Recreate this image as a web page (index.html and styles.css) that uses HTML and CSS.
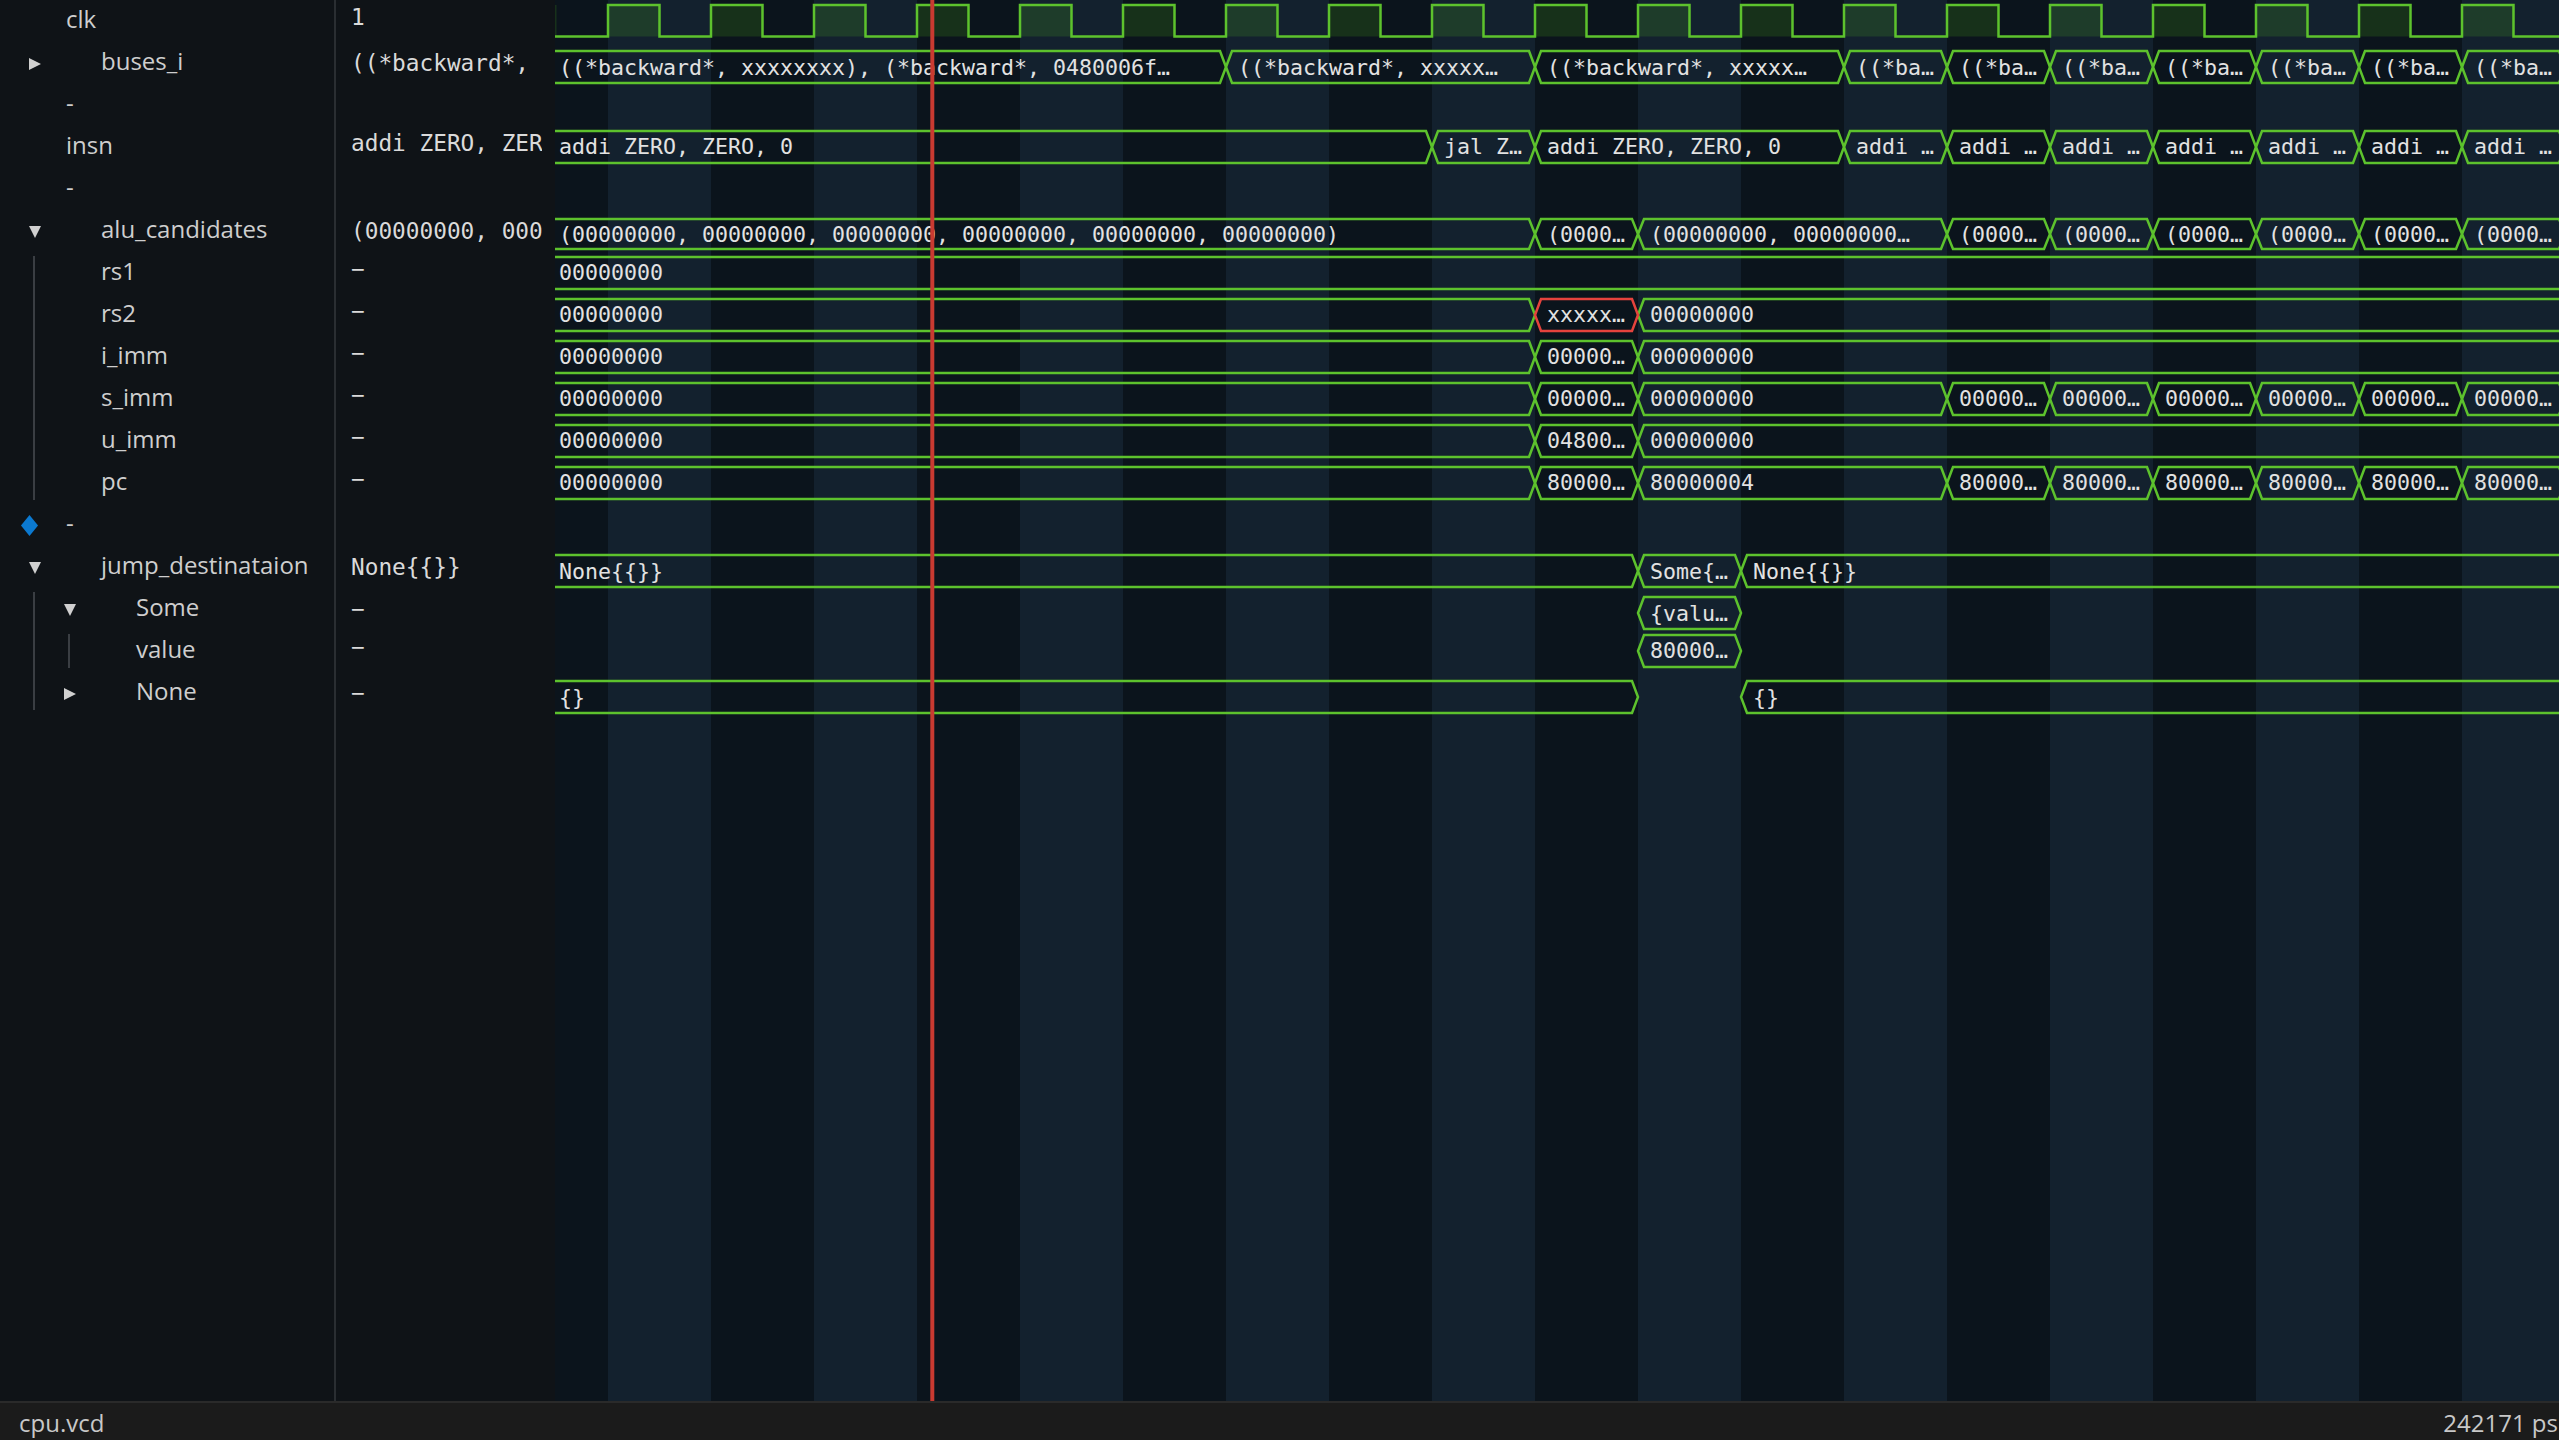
FILE: index.html
```html
<!DOCTYPE html>
<html>
<head>
<meta charset="utf-8">
<title>Surfer - cpu.vcd</title>
<link rel="stylesheet" href="styles.css">
</head>
<body>
<div class="app">
  <div class="main">
    <div class="names">
      <div class="row leaf"><span class="lbl">clk</span></div>
      <div class="row"><svg class="arrow" viewBox="0 0 12 12"><path d="M0,0 L12,6 L0,12 Z"/></svg><span class="lbl">buses_i</span></div>
      <div class="row leaf"><span class="lbl">-</span></div>
      <div class="row leaf"><span class="lbl">insn</span></div>
      <div class="row leaf"><span class="lbl">-</span></div>
      <div class="row"><svg class="arrow" viewBox="0 0 12 12"><path d="M0,0 L12,0 L6,12 Z"/></svg><span class="lbl">alu_candidates</span></div>
      <div class="kids">
        <div class="guide"></div>
        <div class="kids-list">
          <div class="row leaf"><span class="lbl">rs1</span></div>
          <div class="row leaf"><span class="lbl">rs2</span></div>
          <div class="row leaf"><span class="lbl">i_imm</span></div>
          <div class="row leaf"><span class="lbl">s_imm</span></div>
          <div class="row leaf"><span class="lbl">u_imm</span></div>
          <div class="row leaf"><span class="lbl">pc</span></div>
        </div>
      </div>
      <div class="row"><svg class="diamond" viewBox="0 0 17 21"><path d="M8.5,0 L17,10.5 L8.5,21 L0,10.5 Z"/></svg><span class="lbl">-</span></div>
      <div class="row"><svg class="arrow" viewBox="0 0 12 12"><path d="M0,0 L12,0 L6,12 Z"/></svg><span class="lbl">jump_destinataion</span></div>
      <div class="kids">
        <div class="guide"></div>
        <div class="kids-list">
          <div class="row"><svg class="arrow" viewBox="0 0 12 12"><path d="M0,0 L12,0 L6,12 Z"/></svg><span class="lbl">Some</span></div>
          <div class="kids">
            <div class="guide"></div>
            <div class="kids-list">
              <div class="row leaf"><span class="lbl">value</span></div>
            </div>
          </div>
          <div class="row"><svg class="arrow" viewBox="0 0 12 12"><path d="M0,0 L12,6 L0,12 Z"/></svg><span class="lbl">None</span></div>
        </div>
      </div>
    </div>
    <div class="sep"></div>
    <div class="values">
      <div class="vrow">1</div>
      <div class="vrow grp">((*backward*,</div>
      <div class="vrow"></div>
      <div class="vrow">addi ZERO, ZER</div>
      <div class="vrow"></div>
      <div class="vrow grp">(00000000, 000</div>
      <div class="vrow">−</div>
      <div class="vrow">−</div>
      <div class="vrow">−</div>
      <div class="vrow">−</div>
      <div class="vrow">−</div>
      <div class="vrow">−</div>
      <div class="vrow"></div>
      <div class="vrow grp">None{{}}</div>
      <div class="vrow grp">−</div>
      <div class="vrow">−</div>
      <div class="vrow grp">−</div>
    </div>
    <div class="wave">
      <svg class="wave-svg" width="2004" height="1401" viewBox="0 0 2004 1401">
        <defs>
          <pattern id="stripes" x="53" y="0" width="206" height="1401" patternUnits="userSpaceOnUse">
            <rect class="st-dark" width="206" height="1401"/>
            <rect class="st-light" width="103" height="1401"/>
          </pattern>
          <pattern id="clkfill" x="53" y="0" width="103" height="1401" patternUnits="userSpaceOnUse">
            <rect class="clk-hi" width="51.5" height="1401"/>
          </pattern>
          <polygon id="u" points="0,0 6,-16 97,-16 103,0 97,16 6,16"/>
          <polygon id="ua" points="0,0 6,-15 97,-15 103,0 97,15 6,15"/>
        </defs>
        <rect width="2004" height="1401" fill="url(#stripes)"/>
        <rect x="0" y="5" width="2004" height="31.5" fill="url(#clkfill)"/>

        <!-- clk -->
        <path class="sig" d="M0,36.5 H53 V5 H104.5 V36.5 H156 V5 H207.5 V36.5 H259 V5 H310.5 V36.5 H362 V5 H413.5 V36.5 H465 V5 H516.5 V36.5 H568 V5 H619.5 V36.5 H671 V5 H722.5 V36.5 H774 V5 H825.5 V36.5 H877 V5 H928.5 V36.5 H980 V5 H1031.5 V36.5 H1083 V5 H1134.5 V36.5 H1186 V5 H1237.5 V36.5 H1289 V5 H1340.5 V36.5 H1392 V5 H1443.5 V36.5 H1495 V5 H1546.5 V36.5 H1598 V5 H1649.5 V36.5 H1701 V5 H1752.5 V36.5 H1804 V5 H1855.5 V36.5 H1907 V5 H1958.5 V36.5 H2010"/>

        <!-- buses_i -->
        <polygon class="sig" points="-10,67 -4,51 665,51 671,67 665,83 -4,83"/>
        <polygon class="sig" points="671,67 677,51 974,51 980,67 974,83 677,83"/>
        <polygon class="sig" points="980,67 986,51 1283,51 1289,67 1283,83 986,83"/>
        <use href="#u" class="sig" x="1289" y="67"/>
        <use href="#u" class="sig" x="1392" y="67"/>
        <use href="#u" class="sig" x="1495" y="67"/>
        <use href="#u" class="sig" x="1598" y="67"/>
        <use href="#u" class="sig" x="1701" y="67"/>
        <use href="#u" class="sig" x="1804" y="67"/>
        <use href="#u" class="sig" x="1907" y="67"/>
        <text class="wt" x="4" y="74.5">((*backward*, xxxxxxxx), (*backward*, 0480006f…</text>
        <text class="wt" x="683" y="74.5">((*backward*, xxxxx…</text>
        <text class="wt" x="992" y="74.5">((*backward*, xxxxx…</text>
        <text class="wt" x="1301" y="74.5">((*ba…</text>
        <text class="wt" x="1404" y="74.5">((*ba…</text>
        <text class="wt" x="1507" y="74.5">((*ba…</text>
        <text class="wt" x="1610" y="74.5">((*ba…</text>
        <text class="wt" x="1713" y="74.5">((*ba…</text>
        <text class="wt" x="1816" y="74.5">((*ba…</text>
        <text class="wt" x="1919" y="74.5">((*ba…</text>

        <!-- insn -->
        <polygon class="sig" points="-10,147 -4,131 871,131 877,147 871,163 -4,163"/>
        <use href="#u" class="sig" x="877" y="147"/>
        <polygon class="sig" points="980,147 986,131 1283,131 1289,147 1283,163 986,163"/>
        <use href="#u" class="sig" x="1289" y="147"/>
        <use href="#u" class="sig" x="1392" y="147"/>
        <use href="#u" class="sig" x="1495" y="147"/>
        <use href="#u" class="sig" x="1598" y="147"/>
        <use href="#u" class="sig" x="1701" y="147"/>
        <use href="#u" class="sig" x="1804" y="147"/>
        <use href="#u" class="sig" x="1907" y="147"/>
        <text class="wt" x="4" y="154">addi ZERO, ZERO, 0</text>
        <text class="wt" x="889" y="154">jal Z…</text>
        <text class="wt" x="992" y="154">addi ZERO, ZERO, 0</text>
        <text class="wt" x="1301" y="154">addi …</text>
        <text class="wt" x="1404" y="154">addi …</text>
        <text class="wt" x="1507" y="154">addi …</text>
        <text class="wt" x="1610" y="154">addi …</text>
        <text class="wt" x="1713" y="154">addi …</text>
        <text class="wt" x="1816" y="154">addi …</text>
        <text class="wt" x="1919" y="154">addi …</text>

        <!-- alu_candidates -->
        <polygon class="sig" points="-10,234 -4,219 974,219 980,234 974,249 -4,249"/>
        <use href="#ua" class="sig" x="980" y="234"/>
        <polygon class="sig" points="1083,234 1089,219 1386,219 1392,234 1386,249 1089,249"/>
        <use href="#ua" class="sig" x="1392" y="234"/>
        <use href="#ua" class="sig" x="1495" y="234"/>
        <use href="#ua" class="sig" x="1598" y="234"/>
        <use href="#ua" class="sig" x="1701" y="234"/>
        <use href="#ua" class="sig" x="1804" y="234"/>
        <use href="#ua" class="sig" x="1907" y="234"/>
        <text class="wt" x="4" y="241.5">(00000000, 00000000, 00000000, 00000000, 00000000, 00000000)</text>
        <text class="wt" x="992" y="241.5">(0000…</text>
        <text class="wt" x="1095" y="241.5">(00000000, 00000000…</text>
        <text class="wt" x="1404" y="241.5">(0000…</text>
        <text class="wt" x="1507" y="241.5">(0000…</text>
        <text class="wt" x="1610" y="241.5">(0000…</text>
        <text class="wt" x="1713" y="241.5">(0000…</text>
        <text class="wt" x="1816" y="241.5">(0000…</text>
        <text class="wt" x="1919" y="241.5">(0000…</text>

        <!-- rs1 -->
        <polygon class="sig" points="-10,273 -4,257 2024,257 2030,273 2024,289 -4,289"/>
        <text class="wt" x="4" y="280">00000000</text>

        <!-- rs2 -->
        <polygon class="sig" points="-10,315 -4,299 974,299 980,315 974,331 -4,331"/>
        <polygon class="sig" points="1083,315 1089,299 2024,299 2030,315 2024,331 1089,331"/>
        <use href="#u" class="sig bad" x="980" y="315"/>
        <text class="wt" x="4" y="322">00000000</text>
        <text class="wt" x="992" y="322">xxxxx…</text>
        <text class="wt" x="1095" y="322">00000000</text>

        <!-- i_imm -->
        <polygon class="sig" points="-10,357 -4,341 974,341 980,357 974,373 -4,373"/>
        <use href="#u" class="sig" x="980" y="357"/>
        <polygon class="sig" points="1083,357 1089,341 2024,341 2030,357 2024,373 1089,373"/>
        <text class="wt" x="4" y="364">00000000</text>
        <text class="wt" x="992" y="364">00000…</text>
        <text class="wt" x="1095" y="364">00000000</text>

        <!-- s_imm -->
        <polygon class="sig" points="-10,399 -4,383 974,383 980,399 974,415 -4,415"/>
        <use href="#u" class="sig" x="980" y="399"/>
        <polygon class="sig" points="1083,399 1089,383 1386,383 1392,399 1386,415 1089,415"/>
        <use href="#u" class="sig" x="1392" y="399"/>
        <use href="#u" class="sig" x="1495" y="399"/>
        <use href="#u" class="sig" x="1598" y="399"/>
        <use href="#u" class="sig" x="1701" y="399"/>
        <use href="#u" class="sig" x="1804" y="399"/>
        <use href="#u" class="sig" x="1907" y="399"/>
        <text class="wt" x="4" y="406">00000000</text>
        <text class="wt" x="992" y="406">00000…</text>
        <text class="wt" x="1095" y="406">00000000</text>
        <text class="wt" x="1404" y="406">00000…</text>
        <text class="wt" x="1507" y="406">00000…</text>
        <text class="wt" x="1610" y="406">00000…</text>
        <text class="wt" x="1713" y="406">00000…</text>
        <text class="wt" x="1816" y="406">00000…</text>
        <text class="wt" x="1919" y="406">00000…</text>

        <!-- u_imm -->
        <polygon class="sig" points="-10,441 -4,425 974,425 980,441 974,457 -4,457"/>
        <use href="#u" class="sig" x="980" y="441"/>
        <polygon class="sig" points="1083,441 1089,425 2024,425 2030,441 2024,457 1089,457"/>
        <text class="wt" x="4" y="448">00000000</text>
        <text class="wt" x="992" y="448">04800…</text>
        <text class="wt" x="1095" y="448">00000000</text>

        <!-- pc -->
        <polygon class="sig" points="-10,483 -4,467 974,467 980,483 974,499 -4,499"/>
        <use href="#u" class="sig" x="980" y="483"/>
        <polygon class="sig" points="1083,483 1089,467 1386,467 1392,483 1386,499 1089,499"/>
        <use href="#u" class="sig" x="1392" y="483"/>
        <use href="#u" class="sig" x="1495" y="483"/>
        <use href="#u" class="sig" x="1598" y="483"/>
        <use href="#u" class="sig" x="1701" y="483"/>
        <use href="#u" class="sig" x="1804" y="483"/>
        <use href="#u" class="sig" x="1907" y="483"/>
        <text class="wt" x="4" y="490">00000000</text>
        <text class="wt" x="992" y="490">80000…</text>
        <text class="wt" x="1095" y="490">80000004</text>
        <text class="wt" x="1404" y="490">80000…</text>
        <text class="wt" x="1507" y="490">80000…</text>
        <text class="wt" x="1610" y="490">80000…</text>
        <text class="wt" x="1713" y="490">80000…</text>
        <text class="wt" x="1816" y="490">80000…</text>
        <text class="wt" x="1919" y="490">80000…</text>

        <!-- jump_destinataion -->
        <polygon class="sig" points="-10,571 -4,555 1077,555 1083,571 1077,587 -4,587"/>
        <use href="#u" class="sig" x="1083" y="571"/>
        <polygon class="sig" points="1186,571 1192,555 2024,555 2030,571 2024,587 1192,587"/>
        <text class="wt" x="4" y="578.5">None{{}}</text>
        <text class="wt" x="1095" y="578.5">Some{…</text>
        <text class="wt" x="1198" y="578.5">None{{}}</text>

        <!-- Some -->
        <use href="#u" class="sig" x="1083" y="613"/>
        <text class="wt" x="1095" y="620.5">{valu…</text>

        <!-- value -->
        <use href="#u" class="sig" x="1083" y="651"/>
        <text class="wt" x="1095" y="658">80000…</text>

        <!-- None -->
        <polygon class="sig" points="-10,697 -4,681 1077,681 1083,697 1077,713 -4,713"/>
        <polygon class="sig" points="1186,697 1192,681 2024,681 2030,697 2024,713 1192,713"/>
        <text class="wt" x="4" y="704.5">{}</text>
        <text class="wt" x="1198" y="704.5">{}</text>

        <!-- cursor -->
        <rect class="cursor" x="375.3" y="0" width="4" height="1401"/>
      </svg>
    </div>
  </div>
  <div class="status">
    <span class="st-text">cpu.vcd</span>
    <span class="st-text">242171 ps</span>
  </div>
</div>
</body>
</html>
```

FILE: styles.css
```css
* {
  box-sizing: border-box;
}

html,
body {
  margin: 0;
  padding: 0;
}

body {
  width: 2559px;
  height: 1440px;
  overflow: hidden;
  background: #0f1317;
  font-family: "Open Sans", "Noto Sans", sans-serif;
}

.app {
  display: flex;
  flex-direction: column;
  height: 1440px;
}

.main {
  display: flex;
  height: 1401px;
}

/* ---------- signal names ---------- */
.names {
  width: 334px;
  flex: none;
  background: #0f1317;
  overflow: hidden;
}

.row {
  display: flex;
  align-items: center;
  height: 42px;
}

.row.leaf {
  padding-left: 66px;
}

.lbl {
  font-size: 24px;
  line-height: 38px;
  margin-bottom: 4px;
  color: #cecece;
  white-space: nowrap;
}

.arrow {
  width: 12px;
  height: 12px;
  flex: none;
  margin: 1px 60px 0 29px;
  fill: #d0d0d0;
}

.diamond {
  width: 17px;
  height: 21px;
  flex: none;
  margin: 0 28px 0 21px;
  fill: #0b79d0;
}

.kids {
  display: flex;
}

.guide {
  width: 2px;
  flex: none;
  margin: 4px 0 4px 33px;
  background: #3a3e43;
}

.kids-list {
  flex: 1;
  min-width: 0;
}

.sep {
  width: 2px;
  flex: none;
  background: #2a2e32;
}

/* ---------- values column ---------- */
.values {
  width: 219px;
  flex: none;
  background: #0f1317;
}

.vrow {
  height: 42px;
  line-height: 35px;
  padding-left: 15px;
  margin-right: 13px;
  overflow: hidden;
  white-space: nowrap;
  font-family: "DejaVu Sans Mono", monospace;
  font-size: 22.75px;
  color: #dadada;
}

.vrow.grp {
  padding-top: 4px;
}

/* ---------- waveform canvas ---------- */
.wave {
  width: 2004px;
  flex: none;
  overflow: hidden;
  background: #0b141c;
}

.wave-svg {
  display: block;
}

.st-dark {
  fill: #0b141c;
}

.st-light {
  fill: #13212e;
}

.clk-hi {
  fill: rgba(90, 200, 20, 0.16);
}

.sig {
  fill: none;
  stroke: #5dc22d;
  stroke-width: 2.5;
  stroke-linejoin: miter;
}

.sig.bad {
  stroke: #e5433d;
}

.wt {
  font-family: "DejaVu Sans Mono", monospace;
  font-size: 21.6px;
  fill: #e2e2e2;
}

.cursor {
  fill: #c93a31;
}

/* ---------- status bar ---------- */
.status {
  height: 39px;
  flex: none;
  display: flex;
  justify-content: space-between;
  padding: 2px 1px 0 19px;
  border-top: 2px solid #2a2a2a;
  background: #1b1b1b;
}

.st-text {
  font-size: 24px;
  line-height: 35px;
  color: #c8c8c8;
  white-space: nowrap;
}
```
